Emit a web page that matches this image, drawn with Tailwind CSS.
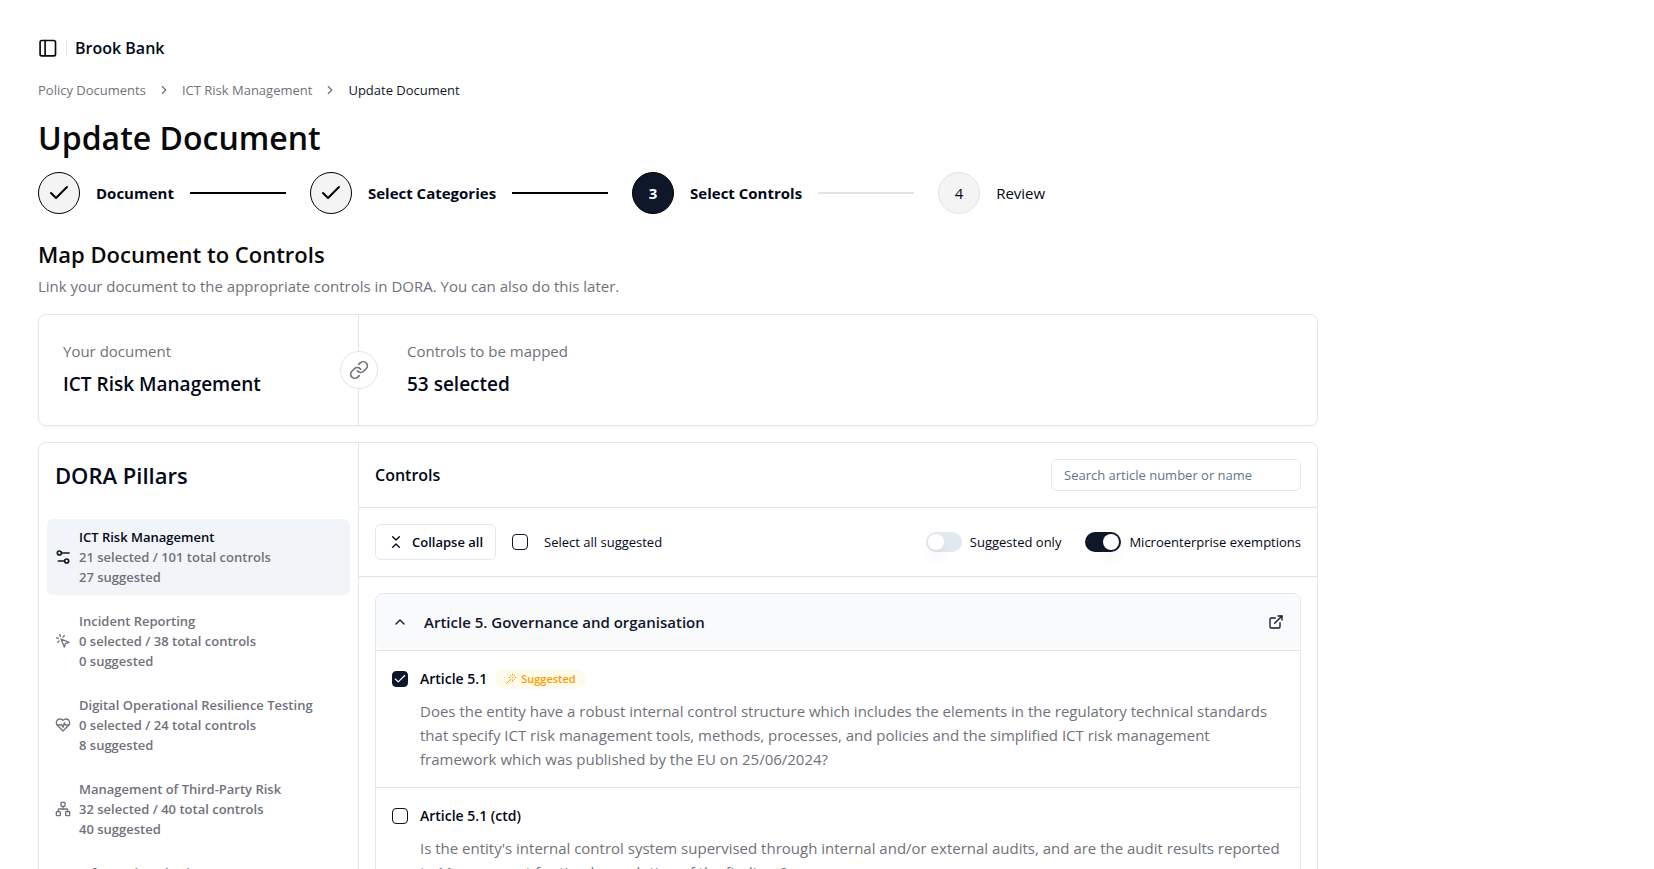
<!DOCTYPE html>
<html lang="en">
<head>
  <meta charset="UTF-8" />
  <meta name="viewport" content="width=device-width, initial-scale=1.0" />
  <title>Update Document - Brook Bank</title>
  <script src="https://cdn.jsdelivr.net/npm/@tailwindcss/browser@4"></script>
</head>

<body class="bg-white font-['Segoe_UI','Open_Sans',sans-serif] text-[15px] leading-6 text-[#020817]">
<div class="h-screen overflow-y-auto px-[38px] pt-9 [scrollbar-width:none]">
  <div class="max-w-7xl">

    <!-- Header -->
    <header class="flex h-6 items-center">
      <button type="button" aria-label="Toggle sidebar">
        <svg class="size-5" viewBox="0 0 24 24" fill="none" stroke="#09090b" stroke-width="2" stroke-linecap="round" stroke-linejoin="round"><rect x="2.500" y="3" width="18.500" height="18.500" rx="2"/><path d="M8.500 3v18"/></svg>
      </button>
      <div class="ml-2 mr-2 h-4 w-px bg-slate-200"></div>
      <span class="text-[16px] font-semibold">Brook Bank</span>
    </header>

    <!-- Breadcrumb -->
    <nav class="mt-5 flex h-5 items-center gap-[11px] text-[13px] leading-5 text-zinc-500" aria-label="Breadcrumb">
      <a href="#">Policy Documents</a>
      <svg class="size-3.5" viewBox="0 0 24 24" fill="none" stroke="currentColor" stroke-width="2" stroke-linecap="round" stroke-linejoin="round"><path d="m9 18 6-6-6-6"/></svg>
      <a href="#">ICT Risk Management</a>
      <svg class="size-3.5" viewBox="0 0 24 24" fill="none" stroke="currentColor" stroke-width="2" stroke-linecap="round" stroke-linejoin="round"><path d="m9 18 6-6-6-6"/></svg>
      <span class="text-[#0f172a]" aria-current="page">Update Document</span>
    </nav>

    <h1 class="mt-[18px] text-[32px] leading-10 font-semibold text-zinc-950">Update Document</h1>

    <!-- Steps -->
    <ol class="mt-3.5 flex items-center gap-6">
      <li class="flex items-center gap-4">
        <span class="flex size-[42px] items-center justify-center rounded-full border border-black bg-zinc-100">
          <svg class="size-6" viewBox="0 0 24 24" fill="none" stroke="black" stroke-width="2" stroke-linecap="round" stroke-linejoin="round"><path d="M20 6 9 17l-5-5"/></svg>
        </span>
        <span class="font-bold">Document</span>
        <span class="h-0.5 w-24 bg-black"></span>
      </li>
      <li class="flex items-center gap-4">
        <span class="flex size-[42px] items-center justify-center rounded-full border border-black bg-zinc-100">
          <svg class="size-6" viewBox="0 0 24 24" fill="none" stroke="black" stroke-width="2" stroke-linecap="round" stroke-linejoin="round"><path d="M20 6 9 17l-5-5"/></svg>
        </span>
        <span class="font-bold">Select Categories</span>
        <span class="h-0.5 w-24 bg-black"></span>
      </li>
      <li class="flex items-center gap-4" aria-current="step">
        <span class="flex size-[42px] items-center justify-center rounded-full border border-black bg-[#0f172a] font-bold text-white">3</span>
        <span class="font-bold">Select Controls</span>
        <span class="h-0.5 w-24 bg-zinc-200"></span>
      </li>
      <li class="flex items-center gap-4">
        <span class="flex size-[42px] items-center justify-center rounded-full border border-zinc-200 bg-zinc-100">4</span>
        <span>Review</span>
      </li>
    </ol>

    <h2 class="mt-6 text-[22px] leading-8 font-semibold text-zinc-950">Map Document to Controls</h2>
    <p class="mt-1 text-zinc-500">Link your document to the appropriate controls in DORA. You can also do this later.</p>

    <!-- Mapping summary -->
    <section class="mt-4 grid grid-cols-[320px_1fr] rounded-lg border border-slate-200 shadow-xs">
      <div class="relative border-r border-zinc-200 px-6 pt-6 pb-[26px]">
        <p class="text-zinc-500">Your document</p>
        <p class="mt-1.5 text-[19px] leading-[30px] font-semibold">ICT Risk Management</p>
        <span class="absolute top-1/2 -right-px flex size-[38px] translate-x-1/2 -translate-y-1/2 items-center justify-center rounded-full border border-zinc-200 bg-white">
          <svg class="size-5 text-zinc-500" viewBox="0 0 24 24" fill="none" stroke="currentColor" stroke-width="2" stroke-linecap="round" stroke-linejoin="round"><path d="M10 13a5 5 0 0 0 7.540.54l3-3a5 5 0 0 0-7.070-7.070l-1.720 1.710"/><path d="M14 11a5 5 0 0 0-7.540-.54l-3 3a5 5 0 0 0 7.070 7.070l1.710-1.710"/></svg>
        </span>
      </div>
      <div class="pt-6 pr-6 pb-[26px] pl-12">
        <p class="text-zinc-500">Controls to be mapped</p>
        <p class="mt-1.5 text-[19px] leading-[30px] font-semibold">53 selected</p>
      </div>
    </section>

    <section class="mt-4 grid grid-cols-[320px_1fr] rounded-lg border border-slate-200 shadow-xs">
      <!-- Pillars -->
      <aside class="border-r border-zinc-200 pb-2">
        <h2 class="px-4 pt-4 text-[22px] leading-8 font-semibold">DORA Pillars</h2>
        <nav class="mt-7 flex flex-col gap-2 px-2 text-[13px] leading-5 font-semibold text-zinc-500">
          <a href="#" class="flex items-center gap-2 rounded-md bg-slate-100 p-2">
            <svg class="size-4 shrink-0 text-[#0f172a]" viewBox="0 0 24 24" fill="none" stroke="currentColor" stroke-width="2.500" stroke-linecap="round" stroke-linejoin="round"><path d="M10 6h11"/><path d="M5 18h9"/><circle cx="17.500" cy="18" r="3"/><circle cx="6.500" cy="6" r="3"/></svg>
            <span><span class="block text-[#020817]">ICT Risk Management</span><span class="block">21 selected / 101 total controls</span><span class="block">27 suggested</span></span>
          </a>
          <a href="#" class="flex items-center gap-2 rounded-md p-2">
            <svg class="size-4 shrink-0" viewBox="0 0 24 24" fill="none" stroke="currentColor" stroke-width="2" stroke-linecap="round" stroke-linejoin="round"><path d="m9 9 5 12 1.800-5.200L21 14Z"/><path d="M7.200 2.200 8 5.100"/><path d="m5.100 8-2.900-.8"/><path d="M14 4.100 12 6"/><path d="m6 12-1.900 2"/></svg>
            <span><span class="block">Incident Reporting</span><span class="block">0 selected / 38 total controls</span><span class="block">0 suggested</span></span>
          </a>
          <a href="#" class="flex items-center gap-2 rounded-md p-2">
            <svg class="size-4 shrink-0" viewBox="0 0 24 24" fill="none" stroke="currentColor" stroke-width="2" stroke-linecap="round" stroke-linejoin="round"><path d="M19 14c1.490-1.460 3-3.210 3-5.500A5.500 5.500 0 0 0 16.500 3c-1.760 0-3 .5-4.500 2-1.500-1.500-2.740-2-4.500-2A5.500 5.500 0 0 0 2 8.500c0 2.300 1.500 4.050 3 5.500l7 7Z"/><path d="M3.220 12H9.500l.5-1 2 4.500 2-7 1.500 3.500h5.270"/></svg>
            <span><span class="block">Digital Operational Resilience Testing</span><span class="block">0 selected / 24 total controls</span><span class="block">8 suggested</span></span>
          </a>
          <a href="#" class="flex items-center gap-2 rounded-md p-2">
            <svg class="size-4 shrink-0" viewBox="0 0 24 24" fill="none" stroke="currentColor" stroke-width="2" stroke-linecap="round" stroke-linejoin="round"><rect x="16" y="16" width="6" height="6" rx="1"/><rect x="2" y="16" width="6" height="6" rx="1"/><rect x="9" y="2" width="6" height="6" rx="1"/><path d="M5 16v-3a1 1 0 0 1 1-1h12a1 1 0 0 1 1 1v3"/><path d="M12 12V8"/></svg>
            <span><span class="block">Management of Third-Party Risk</span><span class="block">32 selected / 40 total controls</span><span class="block">40 suggested</span></span>
          </a>
          <a href="#" class="flex items-center gap-2 rounded-md p-2">
            <svg class="size-4 shrink-0" viewBox="0 0 24 24" fill="none" stroke="currentColor" stroke-width="2" stroke-linecap="round" stroke-linejoin="round"><circle cx="18" cy="5" r="3"/><circle cx="6" cy="12" r="3"/><circle cx="18" cy="19" r="3"/><path d="m8.600 13.500 6.800 4M15.400 6.500l-6.800 4"/></svg>
            <span><span class="block">Information Sharing</span><span class="block">0 selected / 4 total controls</span><span class="block">0 suggested</span></span>
          </a>
        </nav>
      </aside>

      <!-- Controls -->
      <div class="min-w-0">
        <div class="flex items-center justify-between border-b border-zinc-200 p-4">
          <h3 class="text-[16px] font-semibold">Controls</h3>
          <input type="search" aria-label="Search controls" placeholder="Search article number or name"
            class="h-8 w-[250px] rounded-md border border-slate-200 px-3 text-[13px] outline-none placeholder:text-slate-500" />
        </div>

        <div class="flex items-center justify-between border-b border-zinc-200 p-4 text-[13px] leading-5">
          <div class="flex items-center gap-4">
            <button type="button" class="flex h-9 items-center gap-2 rounded-md border border-slate-200 px-3 font-semibold">
              <svg class="size-4" viewBox="0 0 24 24" fill="none" stroke="currentColor" stroke-width="2" stroke-linecap="round" stroke-linejoin="round"><path d="m7 20 5-5 5 5"/><path d="m7 4 5 5 5-5"/></svg>
              Collapse all
            </button>
            <label class="flex items-center gap-4">
              <input type="checkbox" class="size-4 appearance-none rounded-sm border border-[#0f172a]" />
              Select all suggested
            </label>
          </div>
          <div class="flex items-center gap-6">
            <label class="flex items-center gap-2">
              <span class="relative h-5 w-9">
                <input type="checkbox" role="switch" class="peer block h-5 w-9 appearance-none rounded-full bg-slate-200 checked:bg-[#0f172a]" />
                <span class="pointer-events-none absolute top-0.5 left-0.5 size-4 rounded-full bg-white shadow-lg peer-checked:left-[18px]"></span>
              </span>
              Suggested only
            </label>
            <label class="flex items-center gap-2">
              <span class="relative h-5 w-9">
                <input type="checkbox" role="switch" checked class="peer block h-5 w-9 appearance-none rounded-full bg-slate-200 checked:bg-[#0f172a]" />
                <span class="pointer-events-none absolute top-0.5 left-0.5 size-4 rounded-full bg-white shadow-lg peer-checked:left-[18px]"></span>
              </span>
              Microenterprise exemptions
            </label>
          </div>
        </div>

        <div class="p-4">
          <article class="rounded-lg border border-slate-200">
            <div class="flex h-14 items-center rounded-lg bg-slate-50 px-4 text-[#0f172a]">
              <button type="button" class="flex items-center gap-4 font-semibold" aria-expanded="true">
                <svg class="size-4" viewBox="0 0 24 24" fill="none" stroke="currentColor" stroke-width="2" stroke-linecap="round" stroke-linejoin="round"><path d="m18 15-6-6-6 6"/></svg>
                Article 5. Governance and organisation
              </button>
              <a href="#" class="ml-auto" aria-label="Open article">
                <svg class="size-4" viewBox="0 0 24 24" fill="none" stroke="currentColor" stroke-width="2" stroke-linecap="round" stroke-linejoin="round"><path d="M15 3h6v6"/><path d="M10 14 21 3"/><path d="M18 13v6a2 2 0 0 1-2 2H5a2 2 0 0 1-2-2V8a2 2 0 0 1 2-2h6"/></svg>
              </a>
            </div>

            <div class="border-t border-zinc-200 p-4">
              <div class="flex h-6 items-center">
                <span class="relative size-4">
                  <input id="article-5-1" type="checkbox" checked class="peer block size-4 appearance-none rounded-sm border border-[#0f172a] checked:bg-[#0f172a]" />
                  <svg class="pointer-events-none absolute inset-0 hidden size-4 p-px peer-checked:block" viewBox="0 0 24 24" fill="none" stroke="white" stroke-width="2" stroke-linecap="round" stroke-linejoin="round"><path d="M20 6 9 17l-5-5"/></svg>
                </span>
                <label for="article-5-1" class="ml-3 text-[14px] font-semibold">Article 5.1</label>
                <span class="ml-2 flex h-5 items-center gap-1 rounded-full bg-amber-50 px-2.5 text-[11px] leading-4 font-semibold text-amber-500">
                  <svg class="size-3" viewBox="0 0 24 24" fill="none" stroke="currentColor" stroke-width="2" stroke-linecap="round" stroke-linejoin="round"><path d="M15 4V2M15 16v-2M8 9h2M20 9h2M17.800 11.800 19 13M15 9h.01M17.800 6.200 19 5M3 21l9-9M12.200 6.200 11 5"/></svg>
                  Suggested
                </span>
              </div>
              <p class="mt-2 pl-7 text-zinc-500">Does the entity have a robust internal control structure which includes the elements in the regulatory technical standards that specify ICT risk management tools, methods, processes, and policies and the simplified ICT risk management framework which was published by the EU on 25/06/2024?</p>
            </div>

            <div class="border-t border-zinc-200 p-4">
              <div class="flex h-6 items-center">
                <input id="article-5-1-ctd" type="checkbox" class="size-4 appearance-none rounded-sm border border-[#0f172a]" />
                <label for="article-5-1-ctd" class="ml-3 text-[14px] font-semibold">Article 5.1 (ctd)</label>
              </div>
              <p class="mt-2 pl-7 text-zinc-500">Is the entity's internal control system supervised through internal and/or external audits, and are the audit results reported to Management for timely resolution of the findings?</p>
            </div>
          </article>
        </div>
      </div>
    </section>
  </div>
</div>
</body>
</html>
